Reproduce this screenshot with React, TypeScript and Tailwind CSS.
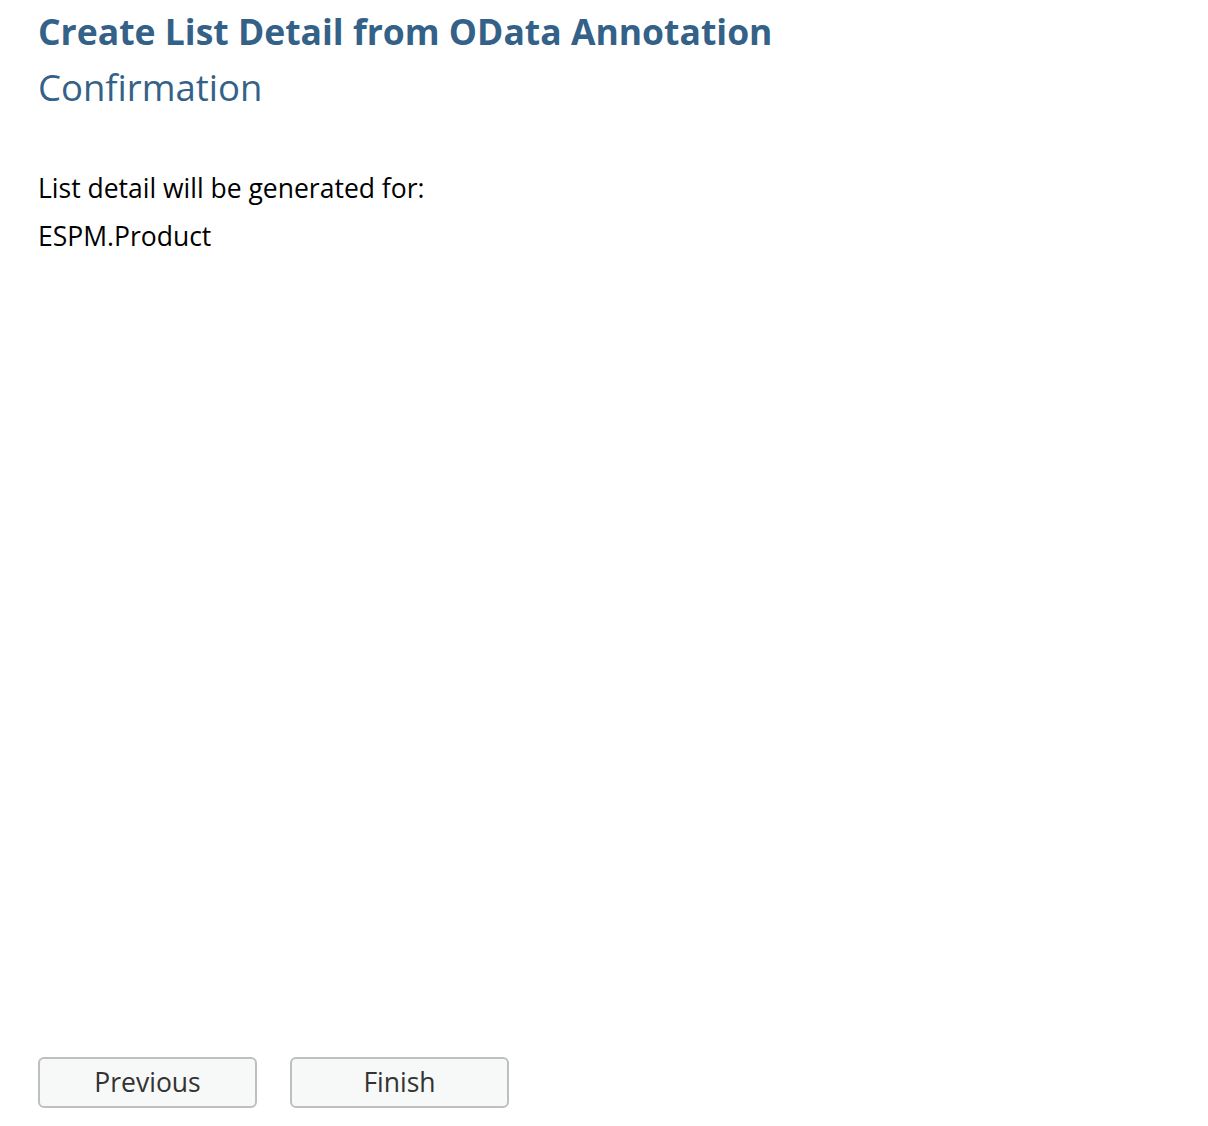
export default function App() {
  return (
    <div className="flex min-h-[1126px] flex-col bg-white px-[38px] pb-[18px] font-['Open_Sans',sans-serif]">
      <h1 className="mt-[8px] text-[35.5px] font-bold leading-[46px] text-[#346187]">
        Create List Detail from OData Annotation
      </h1>
      <h2 className="mt-[10px] text-[36.5px] font-normal leading-[46px] text-[#346187]">Confirmation</h2>
      <div className="mt-[54px] text-[26.5px] leading-[48px] text-black">
        <p>List detail will be generated for:</p>
        <p>ESPM.Product</p>
      </div>
      <div className="mt-auto flex gap-[33px]">
        <button className="h-[51px] w-[219px] rounded-[6px] border-2 border-[#bfbfbf] bg-[#f7f8f8] text-[26.5px] leading-[47px] text-[#333333]">
          Previous
        </button>
        <button className="h-[51px] w-[219px] rounded-[6px] border-2 border-[#bfbfbf] bg-[#f7f8f8] text-[26.5px] leading-[47px] text-[#333333]">
          Finish
        </button>
      </div>
    </div>
  );
}
